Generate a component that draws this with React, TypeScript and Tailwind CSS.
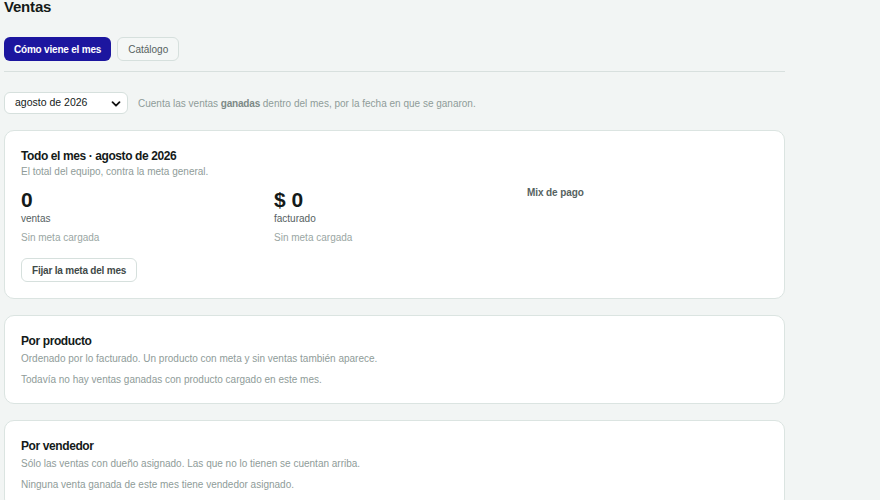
import React from "react";

function Card({ children }: { children: React.ReactNode }) {
  return (
    <div className="rounded-[10px] border border-[#dbe4e1] bg-white px-4 pt-4 pb-4">{children}</div>
  );
}

export default function App() {
  return (
    <div className="h-[500px] overflow-hidden bg-[#f2f5f4] px-1 font-['Liberation_Sans',Arial,sans-serif] text-[#141a19]">
      <div className="w-[781px]">
        <h1 className="-mt-[5px] text-[15px] font-bold leading-6 tracking-[-0.2px] text-[#141a19]">Ventas</h1>
        <div className="mt-[18px] flex gap-1.5">
          <button className="h-6 rounded-md bg-[#1c169f] px-[10px] text-[10px] font-bold tracking-[-0.2px] text-white">
            Cómo viene el mes
          </button>
          <button className="h-6 rounded-md border border-[#d6e0dd] bg-[#f4f7f6] px-[10px] text-[10px] text-[#56625f]">
            Catálogo
          </button>
        </div>
        <div className="mt-[10px] border-t border-[#d8e0de]" />
        <div className="mt-[20px] flex items-center gap-[10px]">
          <div className="relative flex h-[22px] w-[124px] items-center rounded-md border border-[#d6e0dd] bg-white pl-[10px] text-[10.5px] text-[#141a19]">
            agosto de 2026
            <svg className="absolute right-[6px] top-[6px]" width="10" height="10" viewBox="0 0 10 10">
              <path d="M1.5 3.2 L5 6.7 L8.5 3.2" fill="none" stroke="#111" strokeWidth="1.8" strokeLinecap="round" strokeLinejoin="round" />
            </svg>
          </div>
          <p className="text-[10px] text-[#8f9c99]">
            Cuenta las ventas <span className="font-bold tracking-[-0.2px] text-[#7d8a87]">ganadas</span> dentro del mes, por la fecha en que se ganaron.
          </p>
        </div>

        <div className="mt-4">
          <Card>
            <h2 className="text-[12px] font-bold leading-[18px] tracking-[-0.4px]">Todo el mes · agosto de 2026</h2>
            <p className="text-[10px] leading-[14px] text-[#8f9c99]">El total del equipo, contra la meta general.</p>
            <div className="mt-[7px] grid grid-cols-3 gap-3">
              <div>
                <div className="text-[21px] font-bold leading-7">0</div>
                <div className="-mt-0.5 text-[10px] leading-[14px] text-[#56615f]">ventas</div>
                <div className="mt-[5px] text-[10px] leading-[14px] text-[#9aa6a3]">Sin meta cargada</div>
              </div>
              <div>
                <div className="text-[21px] font-bold leading-7">$ 0</div>
                <div className="-mt-0.5 text-[10px] leading-[14px] text-[#56615f]">facturado</div>
                <div className="mt-[5px] text-[10px] leading-[14px] text-[#9aa6a3]">Sin meta cargada</div>
              </div>
              <div>
                <div className="text-[10px] font-bold leading-[14px] tracking-[-0.1px] text-[#56625f]">Mix de pago</div>
              </div>
            </div>
            <button className="mt-[13px] h-6 rounded-md border border-[#d6e0dd] bg-white px-[10px] text-[10px] font-bold tracking-[-0.2px] text-[#3f4a48]">
              Fijar la meta del mes
            </button>
          </Card>
        </div>

        <div className="mt-4">
          <Card>
            <h2 className="text-[12px] font-bold leading-[18px] tracking-[-0.4px]">Por producto</h2>
            <p className="mt-[2px] text-[10px] leading-[14px] text-[#8f9c99]">
              Ordenado por lo facturado. Un producto con meta y sin ventas también aparece.
            </p>
            <p className="mt-[7px] text-[10px] leading-[14px] text-[#8f9c99]">
              Todavía no hay ventas ganadas con producto cargado en este mes.
            </p>
          </Card>
        </div>

        <div className="mt-4">
          <Card>
            <h2 className="text-[12px] font-bold leading-[18px] tracking-[-0.4px]">Por vendedor</h2>
            <p className="mt-[2px] text-[10px] leading-[14px] text-[#8f9c99]">
              Sólo las ventas con dueño asignado. Las que no lo tienen se cuentan arriba.
            </p>
            <p className="mt-[7px] text-[10px] leading-[14px] text-[#8f9c99]">
              Ninguna venta ganada de este mes tiene vendedor asignado.
            </p>
          </Card>
        </div>
      </div>
    </div>
  );
}
